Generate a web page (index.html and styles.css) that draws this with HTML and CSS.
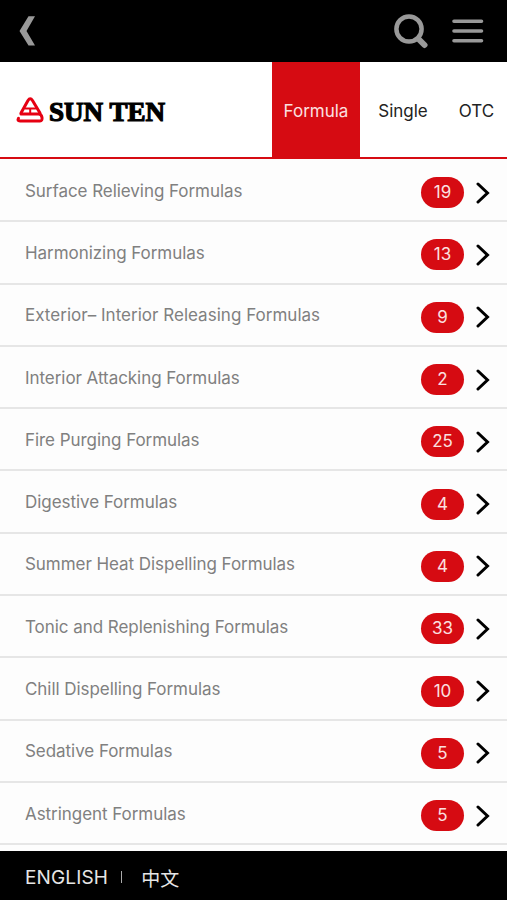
FILE: index.html
```html
<!DOCTYPE html>
<html lang="en">

<head>
    <meta charset="UTF-8">
    <meta name="viewport" content="width=device-width, initial-scale=1.0">
    <title>Sun Ten</title>
    <link rel="stylesheet" href="styles.css">
</head>

<body>
    <!-- Top Bar -->
    <header class="top-bar">
        <svg class="back-icon" width="18" height="32" viewBox="0 0 18 32">
            <path d="M9.5 1.2H16L7.5 16L16 30.5H9.5L0.5 16Z" />
        </svg>
        <div class="top-actions">
            <svg class="search-icon" width="36" height="36" viewBox="0 0 36 36">
                <circle cx="16" cy="16" r="12.6" />
                <path class="handle" d="M26.500 27L31.500 32" />
            </svg>
            <svg class="menu-icon" width="32" height="26" viewBox="0 0 32 26">
                <path d="M2 3.2H29.5M2 13H29.5M2 22.8H29.5" />
            </svg>
        </div>
    </header>

    <!-- Logo and Tabs -->
    <nav class="nav-bar">
        <svg class="logo" width="152" height="32" viewBox="0 0 152 32">
            <g class="logo-mark">
                <path d="M5 19L12 6.500Q14.200 3 16.500 6.500L24 19" />
                <path class="inner" d="M9.500 14.500H19.500M14.200 14.500V20" />
                <path d="M5 20H22.500Q25.500 20 26 23.500Q26.500 27 24 27H4Q1 27 2.500 24.200" />
            </g>
            <text class="logo-text" x="33" y="26.5" textLength="116" lengthAdjust="spacingAndGlyphs">SUN TEN</text>
        </svg>
        <div class="tabs">
            <a class="tab active" href="#">Formula</a>
            <a class="tab single" href="#">Single</a>
            <a class="tab otc" href="#">OTC</a>
        </div>
    </nav>

    <!-- Formula List -->
    <main class="formula-list">
        <a class="row" href="#"><span class="name">Surface Relieving Formulas</span><span class="count">19</span><svg class="arrow" viewBox="0 0 14 22"><path d="M2 2L11.500 11L2 20" /></svg></a>
        <a class="row" href="#"><span class="name">Harmonizing Formulas</span><span class="count">13</span><svg class="arrow" viewBox="0 0 14 22"><path d="M2 2L11.500 11L2 20" /></svg></a>
        <a class="row" href="#"><span class="name wide">Exterior– Interior Releasing Formulas</span><span class="count">9</span><svg class="arrow" viewBox="0 0 14 22"><path d="M2 2L11.500 11L2 20" /></svg></a>
        <a class="row" href="#"><span class="name">Interior Attacking Formulas</span><span class="count">2</span><svg class="arrow" viewBox="0 0 14 22"><path d="M2 2L11.500 11L2 20" /></svg></a>
        <a class="row" href="#"><span class="name">Fire Purging Formulas</span><span class="count">25</span><svg class="arrow" viewBox="0 0 14 22"><path d="M2 2L11.500 11L2 20" /></svg></a>
        <a class="row" href="#"><span class="name">Digestive Formulas</span><span class="count">4</span><svg class="arrow" viewBox="0 0 14 22"><path d="M2 2L11.500 11L2 20" /></svg></a>
        <a class="row" href="#"><span class="name">Summer Heat Dispelling Formulas</span><span class="count">4</span><svg class="arrow" viewBox="0 0 14 22"><path d="M2 2L11.500 11L2 20" /></svg></a>
        <a class="row" href="#"><span class="name">Tonic and Replenishing Formulas</span><span class="count">33</span><svg class="arrow" viewBox="0 0 14 22"><path d="M2 2L11.500 11L2 20" /></svg></a>
        <a class="row" href="#"><span class="name">Chill Dispelling Formulas</span><span class="count">10</span><svg class="arrow" viewBox="0 0 14 22"><path d="M2 2L11.500 11L2 20" /></svg></a>
        <a class="row" href="#"><span class="name">Sedative Formulas</span><span class="count">5</span><svg class="arrow" viewBox="0 0 14 22"><path d="M2 2L11.500 11L2 20" /></svg></a>
        <a class="row" href="#"><span class="name">Astringent Formulas</span><span class="count">5</span><svg class="arrow" viewBox="0 0 14 22"><path d="M2 2L11.500 11L2 20" /></svg></a>
    </main>

    <!-- Language Switch -->
    <footer class="language-bar">
        <a class="english" href="#">ENGLISH</a>
        <span class="divider"></span>
        <a href="#" lang="zh">中文</a>
    </footer>
</body>

</html>
```

FILE: styles.css
```css
* {
    box-sizing: border-box;
}

body {
    margin: 0;
    height: 100vh;
    display: flex;
    flex-direction: column;
    overflow: hidden;
    background-color: #fdfdfd;
    font-family: Inter, "Liberation Sans", "Noto Sans CJK SC", sans-serif;
}

a {
    text-decoration: none;
}

/* Top Bar */
.top-bar {
    height: 62px;
    flex-shrink: 0;
    padding: 0 23px 0 19px;
    background-color: #000;
    display: flex;
    align-items: center;
    justify-content: space-between;
}

.back-icon {
    fill: #999;
}

.top-actions {
    display: flex;
    align-items: center;
    gap: 23px;
}

.search-icon,
.menu-icon {
    fill: none;
    stroke: #999;
    stroke-linecap: round;
}

.search-icon {
    stroke-width: 4.5;
}

.search-icon .handle {
    stroke-width: 6;
}

.menu-icon {
    stroke-width: 3.6;
}

/* Logo and Tabs */
.nav-bar {
    height: 97px;
    flex-shrink: 0;
    padding-left: 16px;
    background-color: #fff;
    border-bottom: 2px solid #d60b12;
    display: flex;
    align-items: center;
    justify-content: space-between;
}

.logo-mark {
    fill: none;
    stroke: #e60012;
    stroke-width: 3;
    stroke-linejoin: round;
    stroke-linecap: round;
}

.logo-mark .inner {
    stroke-width: 2;
}

.logo-text {
    font-family: "Liberation Serif", serif;
    font-size: 27px;
    font-weight: bold;
    stroke: #000;
    stroke-width: 1.2;
}

.tabs {
    align-self: stretch;
    display: flex;
}

.tab {
    display: flex;
    align-items: center;
    justify-content: center;
    padding-top: 3px;
    font-size: 17px;
    color: #222;
}

.tab.active {
    width: 88px;
    background-color: #d60b12;
    color: #fbe0e0;
}

.tab.single {
    width: 86px;
}

.tab.otc {
    width: 61px;
}

/* Formula List */
.formula-list {
    flex: 1;
    padding-top: 1px;
}

.row {
    height: 62.3px;
    padding: 0 17px 0 25px;
    border-bottom: 2px solid #e6e6e6;
    display: flex;
    align-items: center;
}

.name {
    flex: 1;
    padding-top: 1px;
    font-size: 17px;
    letter-spacing: -0.05px;
    color: #808080;
}

.name.wide {
    letter-spacing: 0.02px;
}

.count {
    width: 43px;
    height: 31px;
    margin: 5px 12px 0 0;
    border-radius: 16px;
    background-color: #d60b12;
    color: #fbe0e0;
    font-size: 17px;
    line-height: 31px;
    text-align: center;
}

.arrow {
    width: 14px;
    height: 22px;
    margin-top: 5px;
    fill: none;
    stroke: #000;
    stroke-width: 3;
    stroke-linecap: round;
}

/* Language Switch */
.language-bar {
    height: 49px;
    flex-shrink: 0;
    padding: 3px 25px 0;
    background-color: #000;
    display: flex;
    align-items: center;
}

.language-bar a {
    color: #e6e6e6;
    font-size: 19px;
}

.language-bar .english {
    letter-spacing: 0.15px;
}

.divider {
    width: 1px;
    height: 12px;
    margin: 0 19px 0 13px;
    background-color: #aaa;
}
```
